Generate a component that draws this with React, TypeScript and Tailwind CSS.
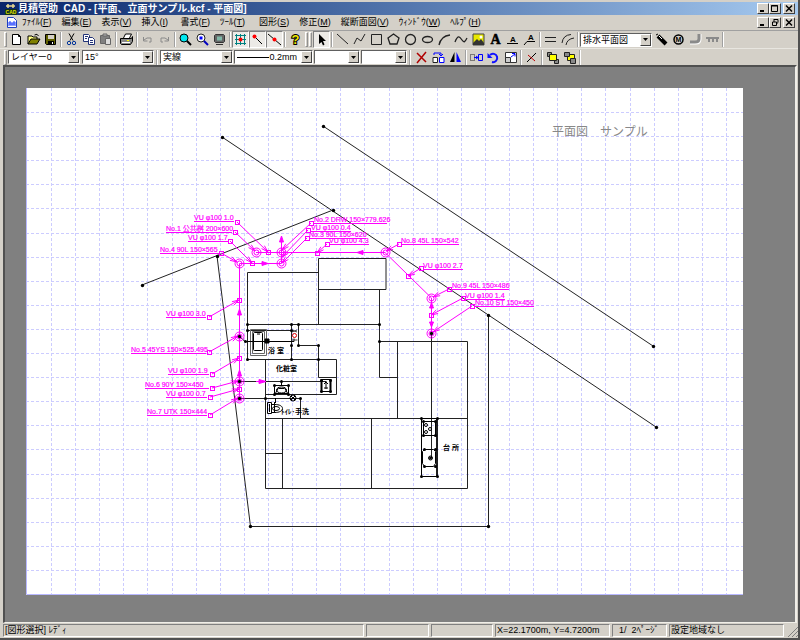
import type { ReactNode } from "react";
import clsx from "clsx";

type Tool = { name: string; icon: ReactNode; pressed?: boolean };
type Point = [number, number];

const menus = [
  { text: "ﾌｧｲﾙ", hotkey: "F" },
  { text: "編集", hotkey: "E" },
  { text: "表示", hotkey: "V" },
  { text: "挿入", hotkey: "I" },
  { text: "書式", hotkey: "F" },
  { text: "ﾂｰﾙ", hotkey: "T" },
  { text: "図形", hotkey: "S" },
  { text: "修正", hotkey: "M" },
  { text: "縦断面図", hotkey: "V" },
  { text: "ｳｨﾝﾄﾞｳ", hotkey: "W" },
  { text: "ﾍﾙﾌﾟ", hotkey: "H" },
];

const fileTools: Tool[] = [
  { name: "新規", icon: <path d="M4.5 3.5h6l2 2v8h-8zM10.5 3.5v2h2" fill="#fff" stroke="#000" /> },
  {
    name: "開く",
    icon: (
      <>
        <path d="M3 13V5h4l1 1h4v2" fill="#ffff80" stroke="#000" />
        <path d="M3 13l3-5h9l-3 5z" fill="#808000" stroke="#000" />
        <path d="M9.5 4q3-2 4 1" fill="none" stroke="#000" />
      </>
    ),
  },
  {
    name: "保存",
    icon: (
      <>
        <path d="M3.5 3.5h10v10h-9l-1-1z" fill="#606000" stroke="#000" />
        <path d="M6 4h6v4H6z" fill="#d4d0c8" />
        <path d="M6 10h6v4H6z" fill="#000" />
        <path d="M10 11h1v2h-1z" fill="#fff" />
      </>
    ),
  },
];

const editTools: Tool[] = [
  {
    name: "切り取り",
    icon: (
      <>
        <path d="M6 2.5l4 7M11 2.5l-4 7" stroke="#000" fill="none" />
        <circle cx="6" cy="12" r="1.7" fill="none" stroke="#003399" />
        <circle cx="11" cy="12" r="1.7" fill="none" stroke="#003399" />
      </>
    ),
  },
  {
    name: "コピー",
    icon: (
      <>
        <path d="M3.5 3.5h5l1 1v6h-6z" fill="#fff" stroke="#223377" />
        <path d="M8.5 6.5h4l2 2v5h-6z" fill="#fff" stroke="#223377" />
        <path d="M5 5.5h3M5 7.5h2M10 9.5h3M10 11.5h3" stroke="#223377" />
      </>
    ),
  },
  {
    name: "貼り付け",
    icon: (
      <>
        <path d="M3.5 4.5h9v8h-9z" fill="#808080" stroke="#666" />
        <path d="M6 3h4v2H6z" fill="#bbb" stroke="#666" />
        <path d="M8.5 7.5h5v6h-5z" fill="#ddd" stroke="#666" />
      </>
    ),
  },
];

const printTools: Tool[] = [
  {
    name: "印刷",
    icon: (
      <>
        <path d="M5.5 7l2-4h6l-2 4" fill="#fff" stroke="#000" />
        <path d="M2.5 7.5h11l1-2v5l-2 3h-9l-1-1z" fill="#888" stroke="#000" />
        <path d="M4 11.5h8" stroke="#fff" />
        <path d="M9 9.5h2" stroke="#ff0" />
      </>
    ),
  },
];

const undoTools: Tool[] = [
  { name: "元に戻す", icon: <path d="M4.5 6v4h4M5 9l3-2h4v4h-2" fill="none" stroke="#8a8a8a" /> },
  { name: "やり直し", icon: <path d="M12.5 6v4h-4M12 9l-3-2H5v4h2" fill="none" stroke="#8a8a8a" /> },
];

const zoomTools: Tool[] = [
  {
    name: "拡大縮小",
    icon: (
      <>
        <circle cx="7" cy="7" r="4" fill="#00e8f0" stroke="#000" />
        <path d="M10 10l4 4" stroke="#000" strokeWidth="2" />
      </>
    ),
  },
  {
    name: "範囲拡大",
    icon: (
      <>
        <circle cx="7" cy="7" r="4" fill="#fff" stroke="#222" />
        <path d="M5.5 5.5h3v3h-3z" fill="#00f" />
        <path d="M10 10l4 4" stroke="#0000c0" strokeWidth="2" />
      </>
    ),
  },
  {
    name: "全体表示",
    icon: (
      <>
        <path d="M4.5 3.5h8l1 1v6l-1 1h-8l-1-1v-6z" fill="#666" stroke="#333" />
        <path d="M6 5.5h5v4H6z" fill="#80b8a8" />
        <path d="M5 13.5h7" stroke="#333" />
      </>
    ),
  },
];

const snapTools: Tool[] = [
  {
    name: "グリッド",
    pressed: true,
    icon: (
      <>
        <path d="M4.5 3v11M8.5 3v11M12.5 3v11M3 4.5h11M3 8.5h11M3 12.5h11" stroke="#008080" />
        <circle cx="8.5" cy="8.5" r="2" fill="#f00" />
      </>
    ),
  },
  {
    name: "端点",
    pressed: true,
    icon: (
      <>
        <path d="M5 5l8 8" stroke="#000" />
        <circle cx="5.5" cy="5.5" r="2" fill="#f00" />
      </>
    ),
  },
  {
    name: "線上",
    pressed: true,
    icon: (
      <>
        <path d="M2 3l13 11" stroke="#000" />
        <circle cx="8.5" cy="8.5" r="2" fill="#f00" />
      </>
    ),
  },
];

const helpTools: Tool[] = [
  {
    name: "ヘルプ",
    icon: (
      <text x="8.5" y="13" textAnchor="middle" fill="#f0e800" stroke="#000" strokeWidth="2" paintOrder="stroke" className="text-[13px] font-bold">
        ?
      </text>
    ),
  },
];

const arrowTools: Tool[] = [
  {
    name: "選択",
    pressed: true,
    icon: <path d="M6 3v10l2.5-2 1.5 3.5 1.5-1L10 10h3z" fill="#000" />,
  },
];

const shapeTools: Tool[] = [
  { name: "直線", icon: <path d="M3 3l11 10" stroke="#222" /> },
  { name: "折線", icon: <path d="M3 13l3-6 4 3 4-7" fill="none" stroke="#222" /> },
  { name: "四角形", icon: <path d="M3.5 3.5h10v10h-10z" fill="none" stroke="#222" /> },
  { name: "多角形", icon: <path d="M8.5 3l5.5 4-2 6h-7l-2-6z" fill="none" stroke="#222" strokeWidth="1.3" /> },
  { name: "円", icon: <circle cx="8.5" cy="8.5" r="5" fill="none" stroke="#222" strokeWidth="1.3" /> },
  { name: "楕円", icon: <ellipse cx="8.5" cy="8.5" rx="5" ry="3" fill="none" stroke="#222" strokeWidth="1.3" /> },
  { name: "円弧", icon: <path d="M3 14Q5 5 14 4" fill="none" stroke="#222" strokeWidth="1.3" /> },
  { name: "曲線", icon: <path d="M2 11C5 3 7 6 9 9s3 2 5-2" fill="none" stroke="#222" strokeWidth="1.3" /> },
  {
    name: "画像",
    icon: (
      <>
        <path d="M3 3h11v11H3z" fill="#e8e800" stroke="#444" />
        <path d="M3 12l4-4 2 2 2-2 3 4v2H3z" fill="#333" />
        <circle cx="11" cy="6" r="1.5" fill="#fff" />
      </>
    ),
  },
  {
    name: "文字",
    icon: (
      <text x="8.5" y="13" textAnchor="middle" stroke="#000" strokeWidth="0.5" className="font-['Liberation_Serif',serif] text-[14px] font-bold">
        A
      </text>
    ),
  },
  {
    name: "引出文字",
    icon: (
      <>
        <path d="M3 12.5h11" stroke="#000" />
        <text x="9" y="11" textAnchor="middle" className="text-[8px] font-bold">
          A
        </text>
      </>
    ),
  },
  {
    name: "斜引出文字",
    icon: (
      <>
        <path d="M3 14l3-3.5h8" fill="none" stroke="#000" />
        <text x="10" y="9" textAnchor="middle" className="text-[8px] font-bold">
          A
        </text>
      </>
    ),
  },
];

const parallelTools: Tool[] = [
  { name: "平行線", icon: <path d="M3 6.5h11M3 10.5h11" stroke="#222" /> },
  { name: "平行円弧", icon: <path d="M3 12Q4 4 12 3.5M7 14Q8 8 15 7" fill="none" stroke="#222" /> },
];

const pipeTools: Tool[] = [
  {
    name: "ペン",
    icon: (
      <>
        <path d="M5 5l8 8" stroke="#000" strokeWidth="4" />
        <path d="M3 4l2-1" stroke="#000" />
        <path d="M6 5l3 3" stroke="#fff" />
      </>
    ),
  },
  {
    name: "桝",
    icon: (
      <>
        <circle cx="8.5" cy="8.5" r="4.5" fill="none" stroke="#000" strokeWidth="1.5" />
        <text x="8.5" y="11" textAnchor="middle" className="text-[7px] font-bold">
          M
        </text>
      </>
    ),
  },
  {
    name: "継手",
    icon: (
      <>
        <path d="M13 3v5q0 4-4 4H3" fill="none" stroke="#fff" strokeWidth="3" />
        <path d="M12 3v5q0 3-4 3H3" fill="none" stroke="#8a8a8a" strokeWidth="3" />
      </>
    ),
  },
  { name: "支持", icon: <path d="M2 7h13M5 7v4M9 7v4M13 7v4" fill="none" stroke="#8a8a8a" strokeWidth="2" /> },
];

const modifyTools: Tool[] = [
  { name: "削除", icon: <path d="M4 4l9 9M13 3l-9 11" stroke="#b00000" strokeWidth="1.5" /> },
  {
    name: "複写",
    icon: (
      <>
        <path d="M3 8.5h4.5v5H3z" fill="#fff" stroke="#222" />
        <path d="M9.5 8.5H14v5H9.5z" fill="#fff" stroke="#00f" />
        <path d="M4 6V4h7v3M9 5l2 2 2-2" fill="none" stroke="#00f" />
      </>
    ),
  },
  {
    name: "反転",
    icon: (
      <>
        <path d="M7.5 3v10H3z" fill="#000" />
        <path d="M9.5 3v10H14z" fill="#00f" />
      </>
    ),
  },
];

const moveTools: Tool[] = [
  {
    name: "移動",
    icon: (
      <>
        <path d="M2.5 5.5h4v6h-4z" fill="none" stroke="#222" strokeDasharray="1 1" />
        <path d="M10.5 5.5h4v6h-4z" fill="none" stroke="#00f" />
        <path d="M6 8.5h4M8 7l2 1.5L8 10" fill="none" stroke="#00f" />
      </>
    ),
  },
  {
    name: "回転",
    icon: (
      <>
        <path d="M5 6a4.2 4.2 0 1 1 2 7" fill="none" stroke="#1010ff" strokeWidth="2" />
        <path d="M2.500 4v5h5z" fill="#1010ff" />
      </>
    ),
  },
  {
    name: "伸縮",
    icon: (
      <>
        <path d="M3.5 3.5h11v10h-11z" fill="#fff" stroke="#333" />
        <path d="M3.5 8.5h5v5h-5z" fill="#ccc" stroke="#333" />
        <path d="M9 8l4-3M10 4.5h3v3" fill="none" stroke="#00f" />
      </>
    ),
  },
];

const trimTools: Tool[] = [
  {
    name: "切断",
    icon: (
      <>
        <path d="M4 13l9-9" stroke="#000" />
        <path d="M5 6l7 6" stroke="#c00000" />
      </>
    ),
  },
];

const orderTools: Tool[] = [
  {
    name: "前面",
    icon: (
      <>
        <path d="M3.5 3.5h4v4h-4zM10.5 10.5h4v4h-4z" fill="#888" stroke="#222" />
        <path d="M5.5 5.5h7v6h-7z" fill="#ff0" stroke="#222" />
      </>
    ),
  },
  {
    name: "背面",
    icon: (
      <>
        <path d="M6.5 5.5h7v6h-7z" fill="#ff0" stroke="#222" />
        <path d="M3.5 3.5h5v4h-5zM9.5 9.5h5v5h-5z" fill="#888" stroke="#222" />
      </>
    ),
  },
];

const pinkLabels: { text: string; x: number; y: number; end: number; box: Point; to: Point }[] = [
  { text: "VU φ100 1.0", x: 194, y: 221, end: 234, box: [237, 222], to: [268, 252] },
  { text: "No.1 公共桝 200×600", x: 166, y: 232, end: 232, box: [235, 232], to: [255, 251] },
  { text: "VU φ100 1.7", x: 188, y: 241, end: 228, box: [230, 241], to: [252, 263] },
  { text: "No.4 90L 150×565", x: 160, y: 253, end: 219, box: [221, 253], to: [237, 262] },
  { text: "VU φ100 3.0", x: 166, y: 317, end: 206, box: [209, 317], to: [239, 300] },
  { text: "No.5 45YS 150×525.495", x: 131, y: 353, end: 206, box: [209, 352], to: [238, 336] },
  { text: "VU φ100 1.9", x: 168, y: 374, end: 209, box: [212, 374], to: [239, 358] },
  { text: "No.6 90Y 150×450", x: 145, y: 388, end: 209, box: [212, 388], to: [238, 381] },
  { text: "VU φ100 0.7", x: 166, y: 397, end: 207, box: [210, 397], to: [239, 389] },
  { text: "No.7 UTK 150×444", x: 147, y: 415, end: 207, box: [210, 415], to: [238, 398] },
  { text: "No.2 DRW 150×779.626", x: 314, y: 223, end: 387, box: [311, 223], to: [282, 250] },
  { text: "VU φ100 0.4", x: 311, y: 231, end: 351, box: [308, 230], to: [282, 257] },
  { text: "No.3 90L 150×620", x: 309, y: 238, end: 366, box: [307, 238], to: [282, 263] },
  { text: "VU φ100 4.3", x: 329, y: 244, end: 369, box: [327, 244], to: [317, 253] },
  { text: "No.8 45L 150×542", x: 401, y: 244, end: 459, box: [399, 244], to: [386, 251] },
  { text: "VU φ100 2.7", x: 423, y: 269, end: 463, box: [421, 268], to: [408, 276] },
  { text: "No.9 45L 150×486", x: 452, y: 289, end: 509, box: [449, 289], to: [433, 297] },
  { text: "VU φ100 1.4", x: 465, y: 299, end: 505, box: [463, 298], to: [431, 315] },
  { text: "No.10 ST 150×450", x: 475, y: 306, end: 534, box: [472, 306], to: [433, 332] },
];

const manholes: Point[] = [
  [256, 252], [281, 252], [281, 263], [239, 263], [385, 252],
  [431, 298], [431, 333], [239, 336], [239, 381], [239, 398],
];

const pipeBoxes: Point[] = [
  [268, 252], [252, 263], [317, 253], [408, 276],
  [239, 300], [239, 358], [239, 389], [431, 315],
];

const siteDots: Point[] = [
  [323, 126], [653, 346], [222, 137], [656, 427], [142, 285], [333, 210],
  [217, 256], [250, 526], [488, 526], [488, 315],
  [239, 336], [239, 381], [239, 398], [431, 333],
];

const houseDots: Point[] = [
  [247, 324], [291, 324], [298, 324], [379, 324], [379, 341], [247, 330], [291, 330],
  [298, 345], [291, 345], [318, 345], [247, 359], [291, 359], [318, 359], [245, 341],
  [281, 381], [265, 398], [300, 398], [274, 385], [288, 385], [274, 394], [288, 394],
  [321, 380], [330, 380], [321, 391], [330, 391], [421, 418], [437, 418], [421, 476], [437, 476],
  [423, 421], [435, 421], [423, 435], [435, 435], [424, 449], [435, 449], [424, 466], [435, 466],
];

const gridX = Array.from({ length: 29 }, (_, i) => 51 + (i * 675) / 28);
const gridY = Array.from({ length: 20 }, (_, i) => 113 + (i * 458) / 19);

// open arrow head at the end of every leader line
function leaderHead([x1, y1]: Point, [x2, y2]: Point) {
  const len = Math.hypot(x2 - x1, y2 - y1);
  const ux = (x2 - x1) / len;
  const uy = (y2 - y1) / len;
  const bx = x2 - ux * 7;
  const by = y2 - uy * 7;
  return `M${bx - uy * 2} ${by + ux * 2}L${x2} ${y2}L${bx + uy * 2} ${by - ux * 2}`;
}

function ToolGroup({ tools }: { tools: Tool[] }) {
  return (
    <div className="flex shrink-0">
      {tools.map((tool) => (
        <button
          key={tool.name}
          type="button"
          aria-label={tool.name}
          className={clsx(
            "h-[17px] w-[17px]",
            tool.pressed && "border border-t-[#808080] border-r-white border-b-white border-l-[#808080] bg-[#eceae6]",
          )}
        >
          <svg viewBox={tool.pressed ? "1 1 15 15" : "0 0 17 17"} className="block h-full w-full">
            {tool.icon}
          </svg>
        </button>
      ))}
    </div>
  );
}

function Separator() {
  return (
    <div className="flex w-1 shrink-0 justify-center">
      <div className="h-[15px] w-[2px] border-r border-l border-r-white border-l-[#a0a0a0]" />
    </div>
  );
}

function Grip() {
  return <div className="h-[15px] w-[3px] shrink-0 border border-t-white border-r-[#909090] border-b-[#909090] border-l-white" />;
}

function ComboBox({ label, value, width, align }: { label: string; value: string; width: string; align?: string }) {
  return (
    <div
      className={clsx(
        "relative h-[14px] shrink-0 border border-t-[#606060] border-r-white border-b-white border-l-[#606060] bg-white",
        width,
      )}
    >
      <select
        aria-label={label}
        className={clsx("block h-full w-full appearance-none bg-transparent pl-0.5 pr-[15px] text-[9px] leading-[12px] outline-none", align)}
      >
        <option>{value}</option>
      </select>
      <div className="pointer-events-none absolute top-0 right-0 flex h-[12px] w-[11px] items-center justify-center border border-t-white border-r-[#404040] border-b-[#404040] border-l-white bg-[#d4d0c8]">
        <svg viewBox="0 0 5 3" className="h-[3px] w-[5px]">
          <path d="M0 0h5L2.5 3z" />
        </svg>
      </div>
    </div>
  );
}

function WindowButtons({ restore }: { restore?: boolean }) {
  const box =
    "h-[11px] w-[12px] border border-t-white border-r-[#404040] border-b-[#404040] border-l-white bg-[#d4d0c8]";
  return (
    <div className="flex shrink-0">
      <button type="button" aria-label="最小化" className={box}>
        <svg viewBox="0 0 10 9" className="block h-full w-full">
          <path d="M2 6h4v2H2z" />
        </svg>
      </button>
      <button type="button" aria-label={restore ? "元のサイズに戻す" : "最大化"} className={box}>
        <svg viewBox="0 0 10 9" className="block h-full w-full">
          {restore ? (
            <path d="M4 1.5h4v3M2.5 4h4v3.5h-4zM4 1v3M8 5H6" fill="none" stroke="#000" />
          ) : (
            <path d="M1.5 1.5h6v6h-6zM1 2h7" fill="none" stroke="#000" />
          )}
        </svg>
      </button>
      <button type="button" aria-label="閉じる" className={clsx(box, "ml-0.5")}>
        <svg viewBox="0 0 10 9" className="block h-full w-full">
          <path d="M2 1.5l6 6M8 1.5l-6 6" stroke="#000" strokeWidth="1.5" />
        </svg>
      </button>
    </div>
  );
}

function Fixtures() {
  return (
    <g fill="none" stroke="#000">
      {/* bath tub */}
      <path d="M250.5 329.5h16v26h-16zM252.5 331.5h12v22h-12z" stroke="#666" />
      <rect x="253.5" y="332.5" width="9" height="18" rx="1" />
      <path d="M257 334h3" />
      <path d="M265 339h4v4h-4z" fill="#000" />
      <path d="M239 336l6 5.500h49v-3" />
      <circle cx="294.5" cy="335.5" r="2" stroke="#e00000" />
      <path d="M292 330l5 2M292 332l5-2M291.5 340h6" stroke="#444" />
      {/* wash basin */}
      <path d="M274.5 385.5h14M274.5 385v9M288.5 385v9M274 393.5h14M275 394l4-7M288 394l-4-7" />
      <ellipse cx="281.5" cy="390" rx="5" ry="3" />
      <path d="M281.5 381v5M279 388.5h5" />
      {/* washing machine */}
      <path d="M321 379.5h10M321 391.5h10" />
      <path d="M321.5 379v13M330.5 379v13" strokeWidth="2" />
      <path d="M326 381v8M324 384l2-2 2 2M324 388h4" />
      {/* toilet */}
      <path d="M267.5 402.5h4v11h-4zM271.5 404.500h3c5 0 8 1.500 8 4s-3 4-8 4h-3M269.5 404v8M274.500 402v11" />
      <ellipse cx="276" cy="408.5" rx="3.5" ry="2" />
      <circle cx="293" cy="398" r="3" />
      <path d="M291 396l4 4M295 396l-4 4M275.5 398v5" />
      {/* kitchen */}
      <path d="M421.5 418.5h15.500v58h-15.500z" />
      <path d="M437 418v58" strokeWidth="1.5" />
      <path d="M423.5 421.5h12v14h-12z" />
      <circle cx="426" cy="425" r="1.5" />
      <circle cx="430" cy="429" r="1.5" />
      <circle cx="426" cy="432" r="1.5" />
      <path d="M424.5 449.5h9l2 2v12l-2 3h-9l-2-3v-12z" />
      <circle cx="430.5" cy="458" r="2" />
      <circle cx="430.5" cy="458" r="1" fill="#000" />
    </g>
  );
}

function Drawing() {
  return (
    <svg viewBox="26 88 717 507" className="block h-full w-full bg-white font-['Liberation_Sans','Noto_Sans_CJK_JP',sans-serif]">
      <g stroke="#ccccff" strokeDasharray="3 2">
        {gridX.map((x) => (
          <path key={x} d={`M${Math.round(x) + 0.5} 88v507`} />
        ))}
        {gridY.map((y) => (
          <path key={y} d={`M26 ${Math.round(y) - 0.5}h717`} />
        ))}
      </g>
      <path d="M26.5 88v506.5h717" fill="none" stroke="#b8b8ff" />

      <text x="552" y="136" fill="#888888" className="text-[12px]">
        平面図　サンプル
      </text>

      <g fill="none" stroke="#222">
        <path d="M323 126L653 346M222 137L656 427M142 285L333 210M217 256L250.5 526.5H488.5V315" />
        <path d="M318.5 272.5H247.5V359.5H336.5V394.5H265.5M318.5 324V258.5H386V289.5H318.5M379.5 289V377.5H397M247 324.5H379" />
        <path d="M379 341.5H467.5V488.5H265.5V359M397.5 341V418M265 418.5H467M371.5 418V488M282.5 418V488M265 453.5H282" />
        <path d="M247 330.5H291M291.5 324V359M298.5 324V345.5H318.5V377.5H336M239 381.5H326M239 398.5H300.5V418M431.5 333V458" />
      </g>
      <Fixtures />
      <g fill="#000">
        {houseDots.map(([x, y]) => (
          <circle key={`${x}-${y}`} cx={x + 0.5} cy={y + 0.5} r="1.5" />
        ))}
      </g>

      <g fill="none" stroke="#ff00ff">
        <path d="M256 252.5H385L431.5 298V333M239.5 398V263.5H281.5V238" />
        <path
          d="M281.5 236l-2 6h4zM357 252.5l6-2v4zM268 263.5l-6-2v4zM239.5 309l-2 6h4zM239.5 370l-2 6h4zM266 381.5l-7-2v4zM256 381.5h6M431.5 303l-2 5h4zM431.5 327l-2-5h4z"
          fill="#ff00ff"
        />
        {manholes.map(([x, y]) => (
          <g key={`${x}-${y}`}>
            <circle cx={x + 0.5} cy={y + 0.5} r="4.5" />
            <circle cx={x + 0.5} cy={y + 0.5} r="2.5" />
          </g>
        ))}
        {pipeBoxes.map(([x, y]) => (
          <rect key={`${x}-${y}`} x={x - 1.5} y={y - 1.5} width="4" height="4" />
        ))}
        {pinkLabels.map(({ text, x, y, end, box, to }) => (
          <g key={text}>
            <path d={`M${x} ${y + 0.5}H${end}M${box[0]} ${box[1]}L${to[0]} ${to[1]}`} />
            <path d={leaderHead(box, to)} />
            <rect x={box[0] - 1.5} y={box[1] - 1.5} width="4" height="4" />
          </g>
        ))}
      </g>
      <g fill="#ff00ff" stroke="#ff00ff" strokeWidth="0.2" className="text-[7px]">
        {pinkLabels.map(({ text, x, y }) => (
          <text key={text} x={x} y={y - 1}>
            {text}
          </text>
        ))}
      </g>

      <g fill="#000">
        {siteDots.map(([x, y]) => (
          <circle key={`${x}-${y}`} cx={x + 0.5} cy={y + 0.5} r="1.7" />
        ))}
      </g>
      <g className="text-[7px] font-bold">
        <text x="268" y="353">浴 室</text>
        <text x="276" y="371">化粧室</text>
        <text x="281" y="414">ﾄｲﾚ･手洗</text>
        <text x="443" y="450">台 所</text>
      </g>
    </svg>
  );
}

function StatusCell({ children, width }: { children?: ReactNode; width: string }) {
  return (
    <div
      className={clsx(
        "h-[13px] overflow-hidden border border-t-[#808080] border-r-white border-b-white border-l-[#808080] pl-px whitespace-pre",
        width,
      )}
    >
      {children}
    </div>
  );
}

export default function App() {
  return (
    <div className="flex h-screen flex-col overflow-hidden border-r-2 border-b-2 border-[#505050] bg-[#d4d0c8] pt-0.5 font-['Liberation_Sans','Noto_Sans_CJK_JP',sans-serif] text-black">
      <header className="flex h-[13px] shrink-0 items-center bg-linear-to-r from-[#0a246a] to-[#a6caf0] pr-[3px] pl-[5px]">
        <svg viewBox="0 0 12 12" className="mr-px h-[12px] w-[12px]">
          <path d="M1 3h9M3 1v4M8 1v4" stroke="#e8d890" strokeWidth="1.5" />
          <path d="M0 6h12v6H0z" fill="#103018" />
          <text x="6" y="11" textAnchor="middle" fill="#e0e000" className="text-[5px] font-bold">
            CAD
          </text>
        </svg>
        <h1 className="flex-1 text-[10px] leading-[13px] font-bold whitespace-pre text-white">
          見積管助  CAD - [平面、立面サンプル.kcf - 平面図]
        </h1>
        <WindowButtons />
      </header>

      <nav className="flex h-[15px] shrink-0 items-center pr-[3px] pl-[6px]">
        <svg viewBox="0 0 11 11" className="h-[11px] w-[11px]">
          <path d="M1.5.5h6l3 3v7h-9z" fill="#fff" stroke="#2040c0" />
          <path d="M3 9V5h2v4M7 9V5h2v4M3 7h6" fill="none" stroke="#2040ff" />
        </svg>
        <div className="flex flex-1">
          {menus.map(({ text, hotkey }) => (
            <button key={text} type="button" className="min-w-[39px] px-[5px] text-left text-[9px] leading-[13px] whitespace-nowrap">
              {text}(<span className="underline">{hotkey}</span>)
            </button>
          ))}
        </div>
        <WindowButtons restore />
      </nav>

      <div className="flex h-[18px] shrink-0 items-center border-t border-[#a0a0a0] pl-1">
        <Grip />
        <div className="w-px" />
        <ToolGroup tools={fileTools} />
        <Separator />
        <ToolGroup tools={editTools} />
        <Separator />
        <ToolGroup tools={printTools} />
        <Separator />
        <ToolGroup tools={undoTools} />
        <Separator />
        <ToolGroup tools={zoomTools} />
        <Separator />
        <ToolGroup tools={snapTools} />
        <Separator />
        <ToolGroup tools={helpTools} />
        <div className="flex gap-px px-px">
          <Grip />
          <Grip />
        </div>
        <ToolGroup tools={arrowTools} />
        <Separator />
        <ToolGroup tools={shapeTools} />
        <Separator />
        <ToolGroup tools={parallelTools} />
        <Separator />
        <ComboBox label="図面" value="排水平面図" width="w-[72px]" />
        <div className="w-px" />
        <ToolGroup tools={pipeTools} />
        <Separator />
      </div>

      <div className="flex h-[17px] shrink-0 items-center border-t border-[#e8e6e0] pl-1">
        <Grip />
        <div className="flex gap-0.5 pl-px">
          <ComboBox label="レイヤー" value="レイヤー0" width="w-[72px]" />
          <ComboBox label="角度" value="15°" width="w-[72px]" />
        </div>
        <div className="px-px">
          <Separator />
        </div>
        <div className="flex gap-px">
          <ComboBox label="線種" value="実線" width="w-[73px]" />
          <div className="relative">
            <ComboBox label="線幅" value="0.2mm" width="w-[79px]" align="text-right [text-align-last:right]" />
            <div className="pointer-events-none absolute top-1/2 left-[3px] h-px w-[32px] bg-black" />
          </div>
          <ComboBox label="始点" value="" width="w-[46px]" />
          <ComboBox label="終点" value="" width="w-[46px]" />
        </div>
        <div className="px-px">
          <Separator />
        </div>
        <ToolGroup tools={modifyTools} />
        <Separator />
        <ToolGroup tools={moveTools} />
        <Separator />
        <ToolGroup tools={trimTools} />
        <Separator />
        <ToolGroup tools={orderTools} />
        <Separator />
      </div>

      <main className="mr-px ml-[3px] min-h-0 flex-1 border-t-2 border-r-2 border-b border-l-2 border-t-[#505050] border-r-[#f0eee8] border-b-[#f0eee8] border-l-[#505050] bg-[#808080] pt-[21px] pr-[52px] pb-[27px] pl-[21px]">
        <Drawing />
      </main>

      <footer className="flex h-[15px] shrink-0 items-center gap-0.5 pl-[3px] text-[9px] leading-[11px]">
        <StatusCell width="flex-1">[図形選択] ﾚﾃﾞｨ</StatusCell>
        <StatusCell width="w-[63px]" />
        <StatusCell width="w-[62px]" />
        <StatusCell width="w-[115px]">X=22.1700m, Y=4.7200m</StatusCell>
        <StatusCell width="w-[55px]">{"  1/  2ﾍﾟｰｼﾞ"}</StatusCell>
        <StatusCell width="w-[115px]">設定地域なし</StatusCell>
        <svg viewBox="0 0 12 12" className="h-[12px] w-[12px]">
          <path d="M2 12L12 2M6 12l6-6M10 12l2-2" stroke="#808080" />
        </svg>
      </footer>
    </div>
  );
}
